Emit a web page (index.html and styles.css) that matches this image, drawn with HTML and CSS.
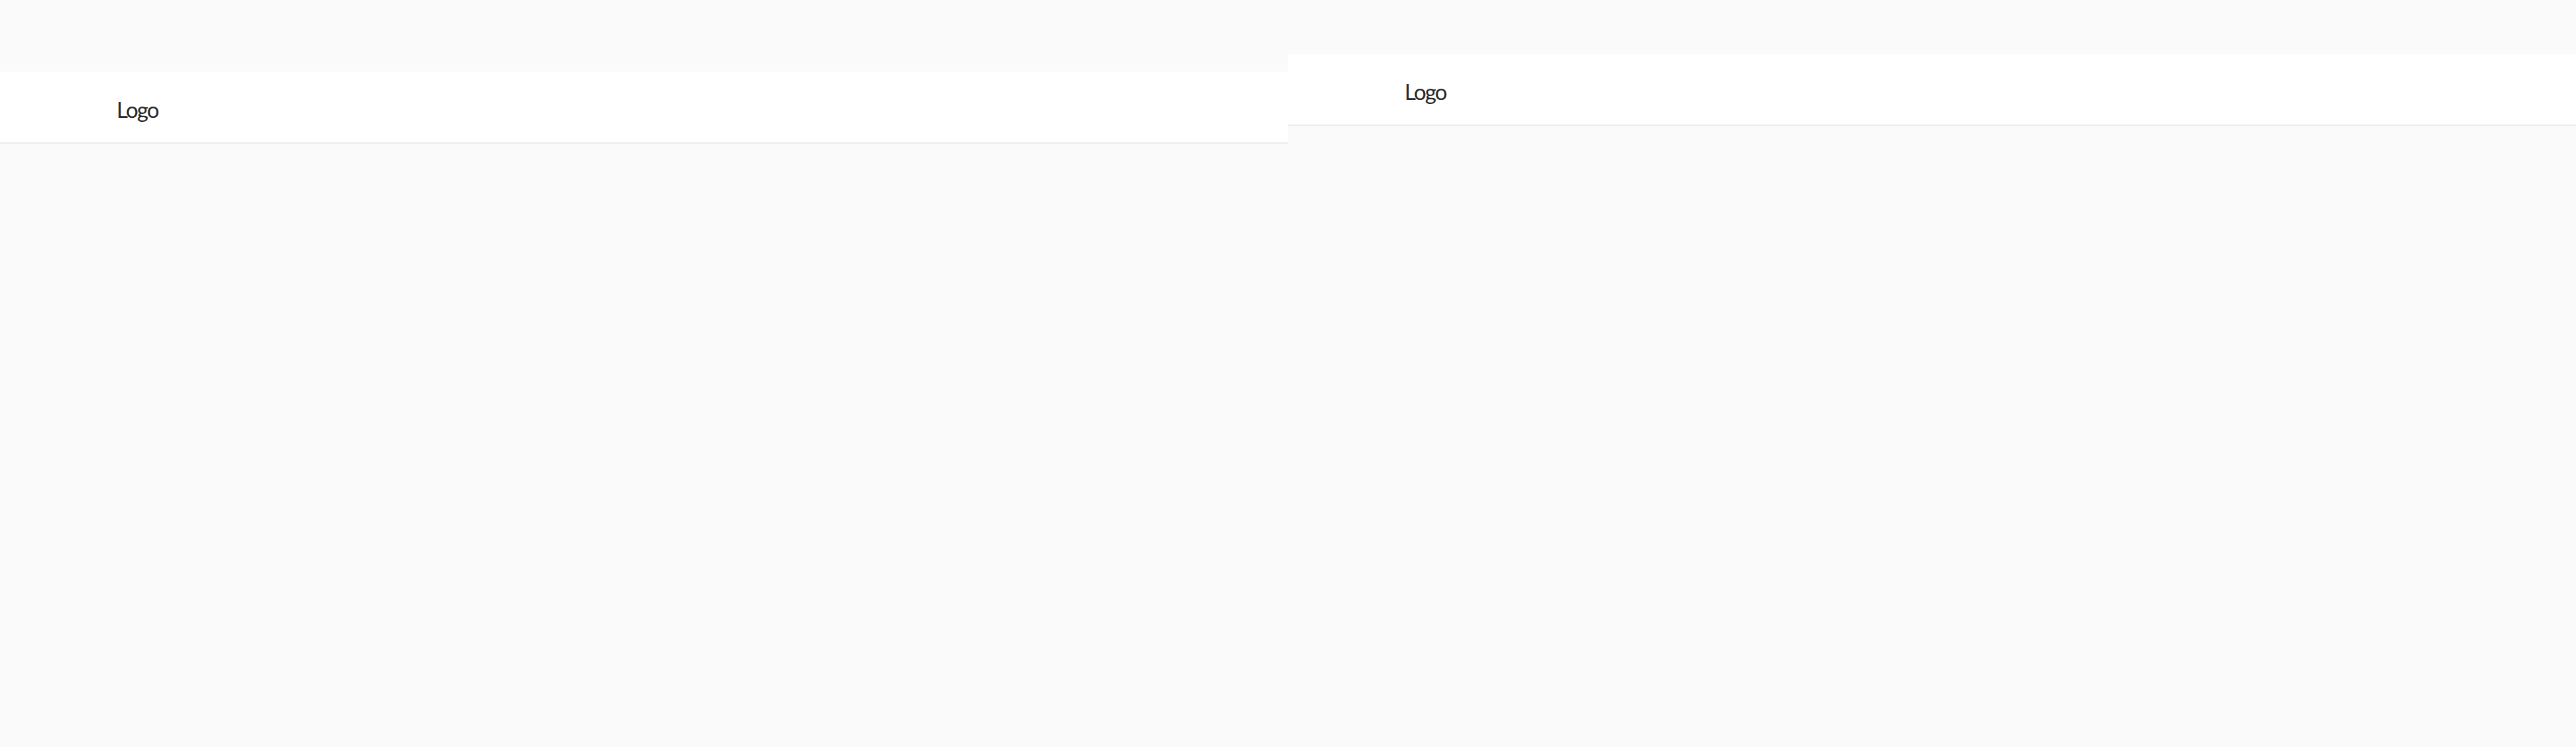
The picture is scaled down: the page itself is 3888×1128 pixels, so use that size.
FILE: index.html
```html
<!DOCTYPE html>
<html lang="en">
<head>
<meta charset="utf-8">
<title>Logo</title>
<link rel="stylesheet" href="styles.css">
</head>
<body>
<div class="frames">
  <section class="frame frame-a">
    <header class="topbar"><span class="logo">Logo</span></header>
  </section>
  <section class="frame frame-b">
    <header class="topbar"><span class="logo">Logo</span></header>
  </section>
</div>
</body>
</html>
```
FILE: styles.css
```css
html, body {
  margin: 0;
  padding: 0;
  height: 100%;
  background: #fafafa;
}
.frames {
  display: flex;
  height: 1128px;
  overflow: hidden;
}
.frame {
  flex: 1 1 0;
  background: #fafafa;
}
.frame-a {
  padding-top: 108px;
}
.frame-b {
  padding-top: 81px;
}
.topbar {
  height: 109px;
  box-sizing: border-box;
  background: #ffffff;
  border-bottom: 2px solid #ebebeb;
  display: flex;
  align-items: center;
  padding-left: 176px;
}
.logo {
  font-family: "Lato", "Noto Sans", sans-serif;
  font-size: 33px;
  color: #262626;
  letter-spacing: -1.8px;
  padding-top: 6px;
}
```
